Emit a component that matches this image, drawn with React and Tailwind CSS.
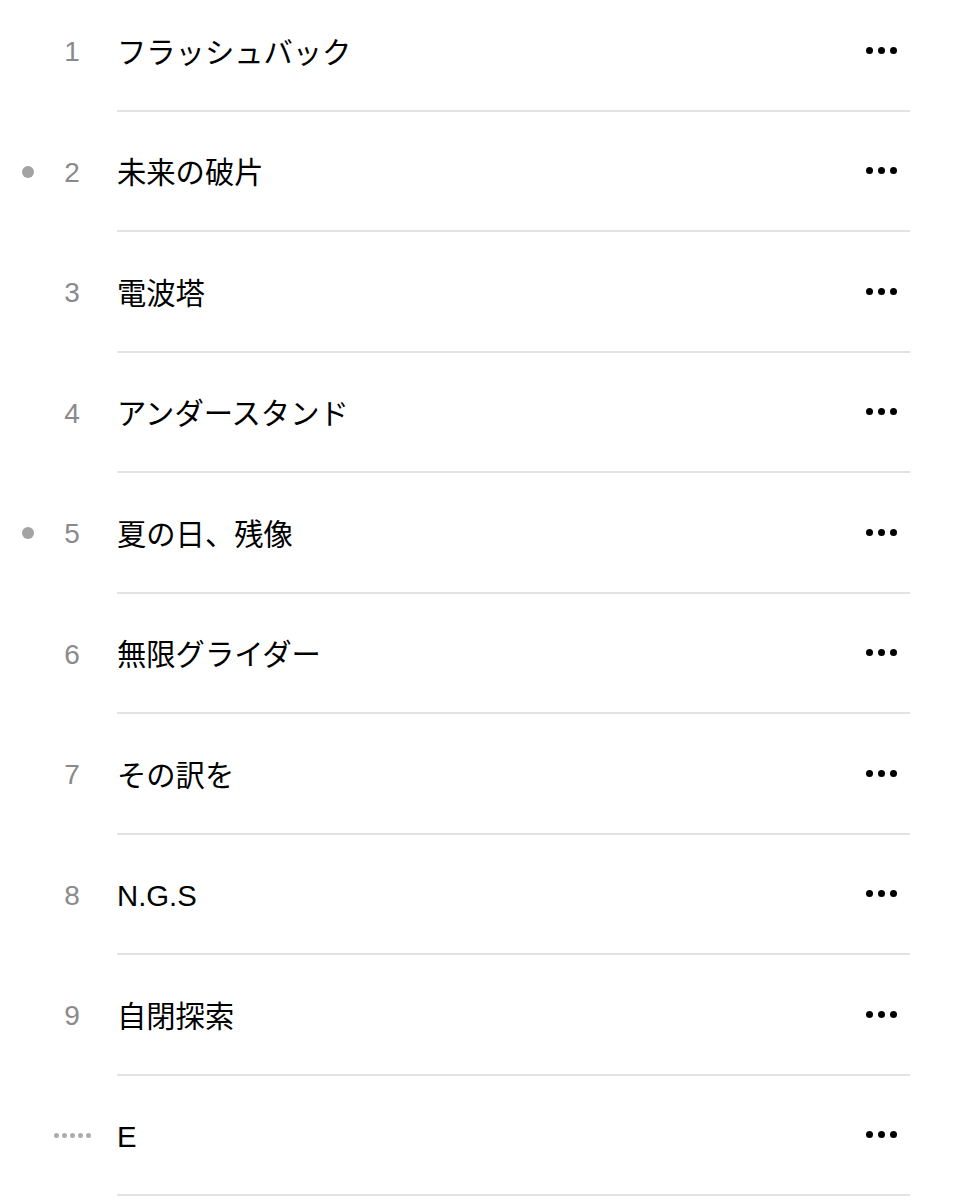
import React from 'react';

const tracks = [
  { num: '1', title: 'フラッシュバック' },
  { num: '2', title: '未来の破片', dot: true },
  { num: '3', title: '電波塔' },
  { num: '4', title: 'アンダースタンド' },
  { num: '5', title: '夏の日、残像', dot: true },
  { num: '6', title: '無限グライダー' },
  { num: '7', title: 'その訳を' },
  { num: '8', title: 'N.G.S' },
  { num: '9', title: '自閉探索' },
  { num: null, title: 'E' },
];

const font = { fontFamily: '"Liberation Sans", "Noto Sans CJK JP", sans-serif' };

const TrackRow = ({ track }) => (
  <div className="flex h-[120.5px] items-stretch">
    <div className="w-[117px] shrink-0 flex items-center">
      <span className="ml-[22px] w-[12px] h-[12px] shrink-0 flex items-center justify-center">
        {track.dot && <span className="w-[12px] h-[12px] rounded-full bg-[#a3a3a6]" />}
      </span>
      {track.num ? (
        <span className="ml-[18px] w-[40px] text-center text-[28px] leading-none pt-[2px] text-[#8a8a8e]">
          {track.num}
        </span>
      ) : (
        <span className="ml-[20px] flex gap-[3px]">
          {[0, 1, 2, 3, 4].map((i) => (
            <span key={i} className="w-[5px] h-[5px] rounded-full bg-[#ababb0]" />
          ))}
        </span>
      )}
    </div>
    <div className="flex-1 flex items-center border-b-2 border-[#e3e3e6] mr-[50px]">
      <span className="flex-1 text-[29.3px] text-black leading-none pt-[4px]">{track.title}</span>
      <span className="flex gap-[5px] mr-[13px]">
        <span className="w-[7px] h-[7px] rounded-full bg-black" />
        <span className="w-[7px] h-[7px] rounded-full bg-black" />
        <span className="w-[7px] h-[7px] rounded-full bg-black" />
      </span>
    </div>
  </div>
);

export default function App() {
  return (
    <div className="w-[960px] h-[1200px] bg-white overflow-hidden" style={font}>
      <div className="mt-[-9px]">
        {tracks.map((t, i) => (
          <TrackRow key={i} track={t} />
        ))}
      </div>
    </div>
  );
}
